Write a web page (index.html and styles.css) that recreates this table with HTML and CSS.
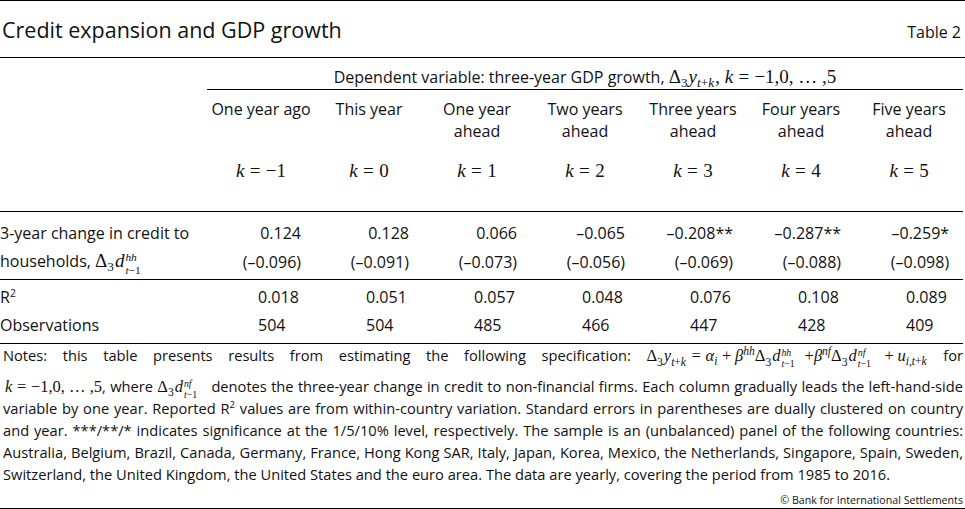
FILE: index.html
```html
<!DOCTYPE html>
<html lang="en">
<head>
<meta charset="utf-8">
<title>Credit expansion and GDP growth</title>
<link rel="stylesheet" href="styles.css">
</head>
<body>
<div class="page">
  <header class="head">
    <h1 class="title">Credit expansion and GDP growth</h1>
    <span class="tag">Table 2</span>
  </header>

  <table class="tbl">
    <colgroup>
      <col class="c-lab">
      <col class="c-val" span="7">
    </colgroup>
    <thead>
      <tr class="r-dep">
        <th></th>
        <th colspan="7" class="dep">Dependent variable: three-year GDP growth, <span class="m">Δ<sub>3</sub><i>y</i><sub><i>t</i>+<i>k</i></sub>, <i>k</i><span class="eq">=</span>−1,0, … ,5</span></th>
      </tr>
      <tr class="r-head">
        <th></th>
        <th>One year ago</th>
        <th>This year</th>
        <th>One year<br>ahead</th>
        <th>Two years<br>ahead</th>
        <th>Three years<br>ahead</th>
        <th>Four years<br>ahead</th>
        <th>Five years<br>ahead</th>
      </tr>
      <tr class="r-k">
        <th></th>
        <th><span class="m"><i>k</i><span class="eq">=</span>−1</span></th>
        <th><span class="m"><i>k</i><span class="eq">=</span>0</span></th>
        <th><span class="m"><i>k</i><span class="eq">=</span>1</span></th>
        <th><span class="m"><i>k</i><span class="eq">=</span>2</span></th>
        <th><span class="m"><i>k</i><span class="eq">=</span>3</span></th>
        <th><span class="m"><i>k</i><span class="eq">=</span>4</span></th>
        <th><span class="m"><i>k</i><span class="eq">=</span>5</span></th>
      </tr>
    </thead>
    <tbody class="b-coef">
      <tr class="r1">
        <th>3-year change in credit to</th>
        <td>0.124</td><td>0.128</td><td>0.066</td><td>–0.065</td><td>–0.208**</td><td>–0.287**</td><td>–0.259*</td>
      </tr>
      <tr class="r2">
        <th>households, <span class="m">Δ<sub>3</sub><i>d</i><span class="ss"><span><i>hh</i></span><span><i>t</i>−1</span></span></span></th>
        <td>(–0.096)</td><td>(–0.091)</td><td>(–0.073)</td><td>(–0.056)</td><td>(–0.069)</td><td>(–0.088)</td><td>(–0.098)</td>
      </tr>
    </tbody>
    <tbody class="b-stats">
      <tr>
        <th>R<sup>2</sup></th>
        <td>0.018</td><td>0.051</td><td>0.057</td><td>0.048</td><td>0.076</td><td>0.108</td><td>0.089</td>
      </tr>
      <tr>
        <th>Observations</th>
        <td>504</td><td>504</td><td>485</td><td>466</td><td>447</td><td>428</td><td>409</td>
      </tr>
    </tbody>
  </table>

  <p class="notes">
    <span class="ln l1">Notes: this table presents results from estimating the following specification: <span class="m f">Δ<sub class="lo">3</sub><i>y</i><sub class="lo"><i>t</i>+<i>k</i></sub><span class="eq">=</span><i>α</i><sub><i>i</i></sub><span class="op">+</span><i>β</i><sup><i>hh</i></sup>Δ<sub class="lo">3</sub><i>d</i><span class="ss"><span><i>hh</i></span><span><i>t</i>−1</span></span><span class="gap"></span>+<i>β</i><sup><i>nf</i></sup>Δ<sub class="lo">3</sub><i>d</i><span class="ss"><span><i>nf</i></span><span><i>t</i>−1</span></span><span class="gap"></span><span class="op">+</span><i>u</i><sub><i>i</i>,<i>t</i>+<i>k</i></sub></span> for</span>
    <span class="ln"><span class="m f lead"><i>k</i><span class="eq">=</span>−1,0, … ,5</span>, where <span class="m f">Δ<sub>3</sub><i>d</i><span class="ss"><span><i>nf</i></span><span><i>t</i>−1</span></span><span class="gap"></span></span> denotes the three-year change in credit to non-financial firms. Each column gradually leads the left-hand-side</span>
    <span class="ln">variable by one year. Reported R<sup>2</sup> values are from within-country variation. Standard errors in parentheses are dually clustered on country</span>
    <span class="ln">and year. ***/**/* indicates significance at the 1/5/10% level, respectively. The sample is an (unbalanced) panel of the following countries:</span>
    <span class="ln">Australia, Belgium, Brazil, Canada, Germany, France, Hong Kong SAR, Italy, Japan, Korea, Mexico, the Netherlands, Singapore, Spain, Sweden,</span>
    <span class="ln last">Switzerland, the United Kingdom, the United States and the euro area. The data are yearly, covering the period from 1985 to 2016.</span>
  </p>

  <div class="copy">© Bank for International Settlements</div>
</div>
</body>
</html>
```
FILE: styles.css
```css
* { box-sizing: border-box; }

html, body {
  margin: 0;
  background: #fff;
}

body {
  font-family: "Open Sans", "Noto Sans", sans-serif;
  font-size: 16px;
  color: #111;
}

.page {
  width: 965px;
}

/* ---------- title bar ---------- */
.head {
  display: flex;
  justify-content: space-between;
  align-items: baseline;
  border-top: 1px solid #000;
  border-bottom: 1px solid #000;
  padding: 17px 4px 15px 2px;
}

.title {
  margin: 0;
  font-size: 21.5px;
  font-weight: 400;
  line-height: 24px;
}

.tag {
  font-size: 16px;
  line-height: 18px;
}

/* ---------- table ---------- */
.tbl {
  border-collapse: separate;
  border-spacing: 0;
  table-layout: fixed;
  width: 963px;
}

.c-lab { width: 207px; }
.c-val { width: 108px; }

.tbl th,
.tbl td {
  padding: 0;
  font-weight: 400;
}

.r-dep th {
  padding: 8px 0 1px;
  line-height: 22px;
}

.r-dep .dep {
  text-align: center;
  border-bottom: 1px solid #000;
}

.r-head th {
  padding: 8px 0 0;
  line-height: 22px;
  text-align: center;
  vertical-align: top;
}

.r-k th {
  padding: 18px 0 29px;
  line-height: 22px;
  text-align: center;
  border-bottom: 1px solid #000;
}

tbody th {
  text-align: left;
  padding-left: 2px;
  white-space: nowrap;
}

.b-coef th,
.b-coef td {
  line-height: 28px;
}

.b-coef .r1 > * { padding-top: 7px; }

.b-coef .r2 > * {
  padding-bottom: 3px;
  border-bottom: 1px solid #000;
}

.b-coef td {
  text-align: right;
  padding-right: 14px;
}

.b-stats th,
.b-stats td {
  line-height: 28px;
}

.b-stats td {
  text-align: left;
  padding-left: 51px;
}

.b-stats tr:first-child > * { padding-top: 3px; }

.b-stats tr:last-child > * {
  padding-bottom: 4px;
  border-bottom: 1px solid #000;
}

sup {
  font-size: 0.65em;
  line-height: 0;
  vertical-align: 0.6em;
}

/* ---------- math ---------- */
.m {
  font-family: "Liberation Serif", "DejaVu Serif", serif;
  font-size: 19px;
  white-space: nowrap;
}

.m i { font-style: italic; }

.eq { margin: 0 0.28em; }
.op { margin: 0 0.22em; }

.m sub {
  font-size: 0.7em;
  line-height: 0;
  vertical-align: -0.3em;
  margin-right: 1px;
}

.m sup {
  font-size: 0.7em;
  line-height: 0;
  vertical-align: 0.55em;
}

.ss {
  display: inline-flex;
  flex-direction: column;
  font-size: 0.6em;
  line-height: 1.12;
  vertical-align: 0.55em;
  margin-left: 1px;
}

.ss > span { display: block; }

.gap {
  display: inline-block;
  width: 0.6em;
}

/* ---------- notes ---------- */
.notes {
  margin: 0;
  padding: 0 2px 0 3px;
  font-size: 14.67px;
}

.ln {
  display: block;
  height: 22px;
  line-height: 22px;
  white-space: nowrap;
  text-align: justify;
  text-align-last: justify;
}

.ln.l1 { height: 31px; }
.ln.last { text-align-last: left; }

.notes .m { font-size: 16.5px; }

.f { display: inline-block; }
.notes sub.lo { vertical-align: -0.45em; }
.lead { margin-left: 2px; }

/* ---------- source ---------- */
.copy {
  font-size: 10.67px;
  line-height: 14px;
  text-align: right;
  padding: 8px 2px 1px;
  border-bottom: 1px solid #000;
}
```
